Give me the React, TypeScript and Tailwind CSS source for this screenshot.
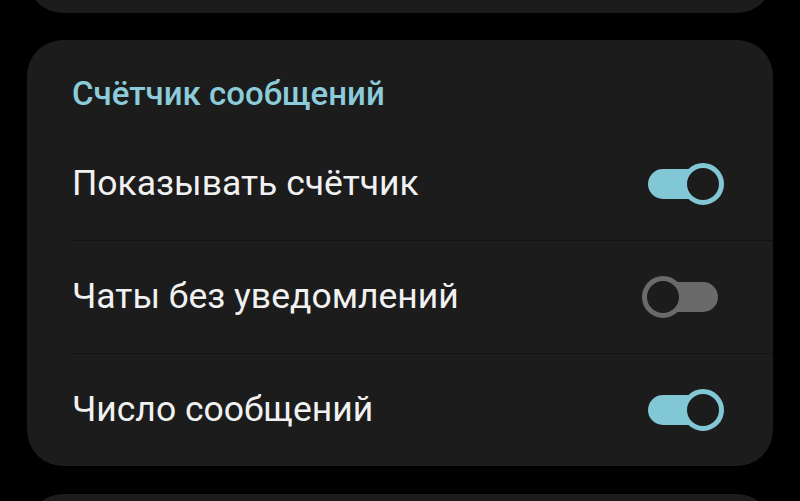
import { useState } from 'react';

type Row = { label: string; on: boolean };

function Toggle({ on, onClick }: { on: boolean; onClick: () => void }) {
  return (
    <button
      onClick={onClick}
      className="relative flex h-[44px] w-[82px] shrink-0 items-center"
    >
      <span
        className={`mx-[6px] h-[30px] w-[70px] rounded-full ${on ? 'bg-[#82c7d5]' : 'bg-[#6a6a6a]'}`}
      />
      <span
        className={`absolute top-[1px] h-[42px] w-[42px] rounded-full border-[5px] bg-[#1c1c1c] ${
          on ? 'right-0 border-[#82c7d5]' : 'left-0 border-[#6a6a6a]'
        }`}
      />
    </button>
  );
}

export default function App() {
  const [rows, setRows] = useState<Row[]>([
    { label: 'Показывать счётчик', on: true },
    { label: 'Чаты без уведомлений', on: false },
    { label: 'Число сообщений', on: true },
  ]);

  const flip = (i: number) =>
    setRows((prev) => prev.map((r, j) => (j === i ? { ...r, on: !r.on } : r)));

  return (
    <div
      className="flex h-[501px] w-[800px] flex-col overflow-hidden bg-black"
      style={{ fontFamily: 'Roboto, "Noto Sans", sans-serif' }}
    >
      {/* previous section, scrolled mostly out of view */}
      <div className="mx-[27px] mt-[-67px] h-[80px] shrink-0 rounded-[36px] bg-[#1c1c1c]" />

      <section className="mx-[27px] mt-[27px] shrink-0 rounded-[36px] bg-[#1c1c1c]">
        <div className="flex h-[88px] items-end pb-[18px] pl-[45px]">
          <h2 className="text-[33px] font-medium leading-none text-[#8ccbd9]">Счётчик сообщений</h2>
        </div>
        {rows.map((r, i) => (
          <div key={r.label} className="ml-[45px]">
            {i > 0 && <div className="h-px bg-[#121212]" />}
            <div className="flex h-[112px] items-center justify-between pr-[49px]">
              <span className="text-[35.5px] leading-none text-[#f1f1f1]">{r.label}</span>
              <Toggle on={r.on} onClick={() => flip(i)} />
            </div>
          </div>
        ))}
      </section>

      {/* next section */}
      <div className="mx-[27px] mt-[28px] h-[120px] shrink-0 rounded-[36px] bg-[#1c1c1c]" />
    </div>
  );
}
